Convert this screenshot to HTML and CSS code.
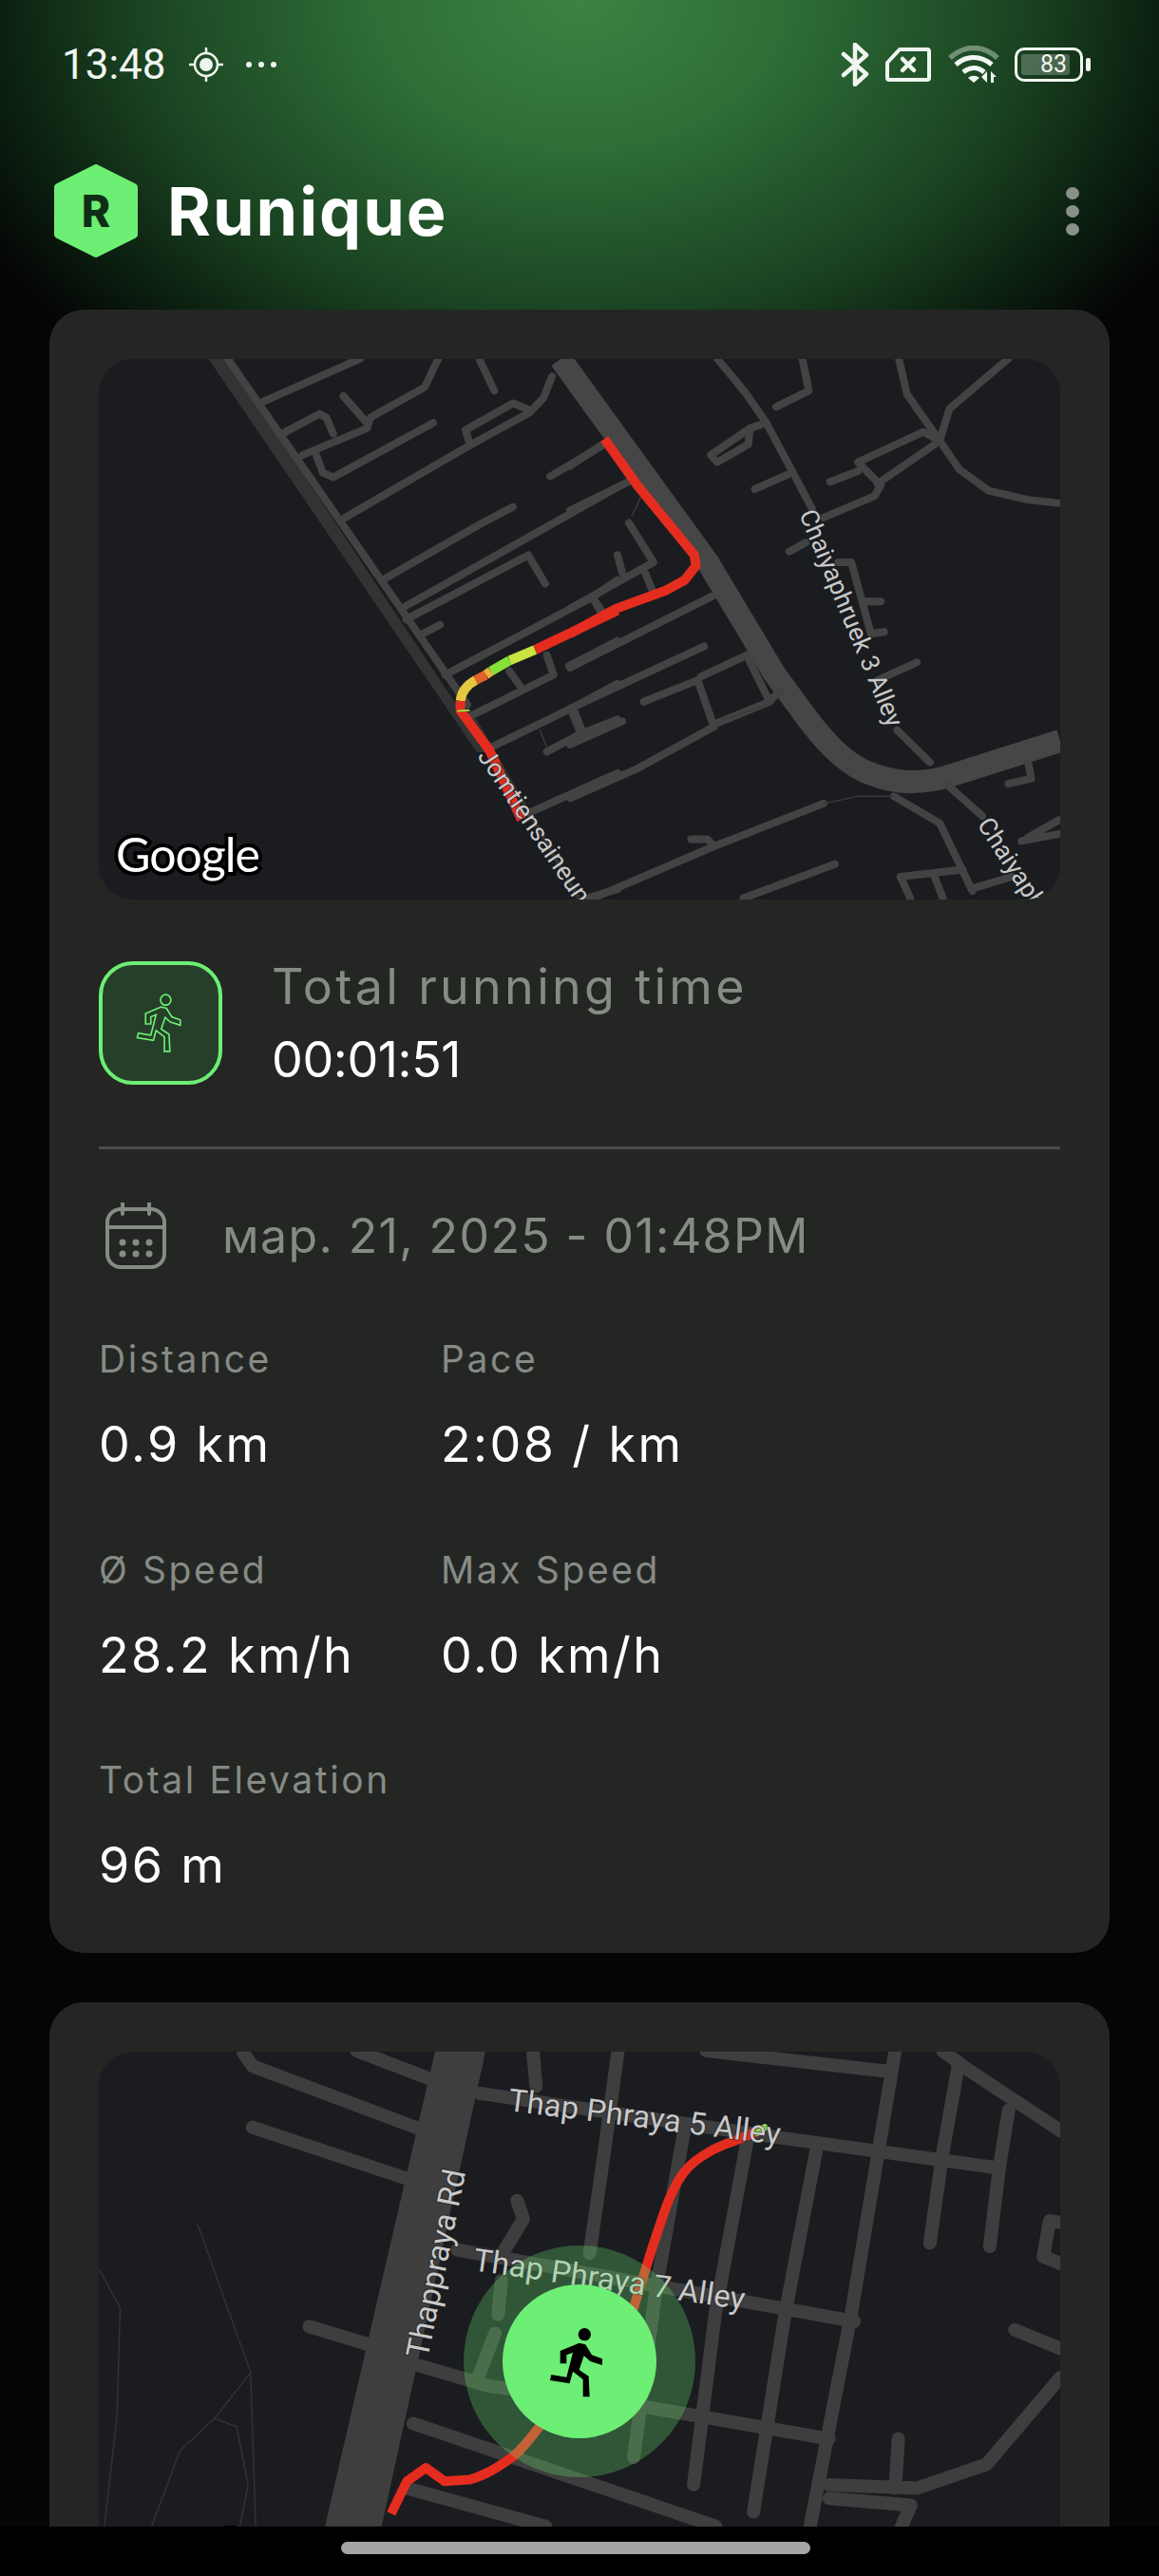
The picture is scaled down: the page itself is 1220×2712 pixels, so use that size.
FILE: index.html
```html
<!DOCTYPE html>
<html lang="en">
<head>
  <meta charset="UTF-8">
  <meta name="viewport" content="width=device-width, initial-scale=1.0">
  <title>Runique</title>
  <link rel="stylesheet" href="styles.css">
</head>
<body>

  <div class="status-bar">
    <div class="status-left">
      <span class="clock">13:48</span>
      <svg class="status-locate" viewBox="0 0 36 36">
        <circle cx="18" cy="18" r="12" fill="none" stroke="#f1f5f0" stroke-width="2.5"/>
        <circle cx="18" cy="18" r="7" fill="#f1f5f0"/>
        <path d="M18 0v6M18 30v6M0 18h6M30 18h6" stroke="#f1f5f0" stroke-width="2.5"/>
      </svg>
      <svg class="status-more" viewBox="0 0 36 8">
        <circle cx="5" cy="4" r="3" fill="#f1f5f0"/>
        <circle cx="18" cy="4" r="3" fill="#f1f5f0"/>
        <circle cx="31" cy="4" r="3" fill="#f1f5f0"/>
      </svg>
    </div>
    <div class="status-right">
      <svg class="status-bt" viewBox="0 0 30 46">
        <path d="M3 12l24 21-12 11V2l12 11L3 34" fill="none" stroke="#f1f5f0" stroke-width="4.5" stroke-linejoin="round" stroke-linecap="round"/>
      </svg>
      <svg class="status-sim" viewBox="0 0 48 36">
        <path d="M15 2h29a2 2 0 0 1 2 2v28a2 2 0 0 1-2 2H4a2 2 0 0 1-2-2V16z" fill="none" stroke="#f1f5f0" stroke-width="4" stroke-linejoin="round"/>
        <path d="M18 12l12 12M30 12L18 24" stroke="#f1f5f0" stroke-width="4.5" stroke-linecap="round"/>
      </svg>
      <svg class="status-wifi" viewBox="0 0 56 40">
        <path d="M3 13C18-1 38-1 53 13" fill="none" stroke="#f1f5f0" stroke-opacity=".4" stroke-width="5.5"/>
        <path d="M9 20c12-10 26-10 38 0" fill="none" stroke="#f1f5f0" stroke-width="5"/>
        <path d="M17 28c7-6 15-6 22 0" fill="none" stroke="#f1f5f0" stroke-width="5"/>
        <path d="M22 34c4-3 8-3 12 0l-6 5z" fill="#f1f5f0"/>
        <path d="M42 27v12l-6-6zM46 27l6 6h-3v6h-3z" fill="#f1f5f0"/>
      </svg>
      <div class="battery">
        <div class="battery-body"><span class="battery-level">83</span></div>
        <div class="battery-nub"></div>
      </div>
    </div>
  </div>

  <div class="topbar">
    <div class="brand">
      <svg class="brand-logo" viewBox="0 0 88 98">
        <polygon class="brand-hex" points="44,4 84,24 84,74 44,94 4,74 4,24"/>
        <text class="brand-letter" x="44" y="66" text-anchor="middle">R</text>
      </svg>
      <span class="brand-name">Runique</span>
    </div>
    <div class="menu-dots"><i></i><i></i><i></i></div>
  </div>

  <div class="card">
    <div class="map">
      <svg class="map-svg" viewBox="104 378 1012 569">
        <polygon class="road-dark" points="222,378 236,378 510,790 503,790"/>
        <path class="road" d="M240 378L492 742"/>
        <path class="road-wide" d="M590 378L745 592L815 709L848 754C866 778 885 800 910 812C930 820 945 824 961 823C975 823 985 821 996 818L1116 780"/>
        <path class="road-dark" d="M495 750L610 947" />
        <g transform="translate(90 370) scale(.3571 .3762)">
          <path class="road" d="M525 140L810 20"/>
          <path class="road" d="M590 225L690 175L710 185L730 230"/>
          <path class="road" d="M640 290L690 270L830 215L840 185L1000 100L1040 20"/>
          <path class="road" d="M760 125L830 200"/>
          <path class="road" d="M1160 20L1205 110"/>
          <path class="road" d="M680 290L700 340L730 352L1025 200"/>
          <path class="road" d="M765 465L1110 275L1310 170L1350 130L1375 70"/>
          <path class="road" d="M1130 250L1120 220L1260 145L1300 160"/>
          <path class="road" d="M1370 350L1520 265"/>
          <path class="road" d="M875 640L1040 550L1170 480L1260 435"/>
          <path class="road" d="M930 720L1568 380"/>
          <path class="road" d="M945 750L1305 570L1355 650"/>
          <path class="road" d="M985 795L1045 765"/>
          <path class="road" d="M1060 905L1490 690L1568 640"/>
          <path class="road" d="M1495 690L1520 730"/>
          <path class="road" d="M1135 1020L1380 905L1360 850"/>
          <path class="road" d="M1250 895L1280 935"/>
          <path class="road" d="M1425 880L1568 810"/>
          <path class="road" d="M1190 1110L1430 1000L1568 930"/>
          <path class="road" d="M1430 1000L1460 1070L1360 1120"/>
          <path class="road" d="M1460 1070L1568 1030"/>
          <path class="road" d="M1310 1290L1568 1180"/>
          <path class="road" d="M1480 1530L1568 1505"/>
          <path class="road-thin" d="M1340 1060L1360 1110"/>
        </g>
        <g transform="translate(600 370) scale(.3444 .3762)">
          <path class="road" d="M450 20L540 120L600 200L740 440"/>
          <path class="road" d="M1000 1060L1100 1150"/>
          <path class="road" d="M600 200L550 215L430 290L450 310L545 260L550 215"/>
          <path class="road" d="M565 385L665 345"/>
          <path class="road" d="M775 465L930 405L950 375L880 310L1080 225L1130 250"/>
          <path class="road" d="M1115 260L940 370"/>
          <path class="road" d="M795 365L880 335"/>
          <path class="road" d="M1005 20L1030 120L1130 250L1190 330L1280 390L1400 415L1497 425"/>
          <path class="road" d="M1130 250L1160 160L1340 20"/>
          <path class="road" d="M630 155L730 110L710 20"/>
          <path class="road" d="M670 560L720 535"/>
          <path class="road" d="M820 590L860 590L920 790L960 785"/>
          <path class="road" d="M905 700L950 700"/>
          <path class="road" d="M940 920L1060 870"/>
          <path class="road" d="M0 320L100 260"/>
          <path class="road" d="M0 445L190 360"/>
          <path class="road" d="M180 480L255 590L0 720"/>
          <path class="road" d="M145 570L160 620"/>
          <path class="road" d="M230 620L250 665"/>
          <path class="road" d="M70 690L100 730"/>
          <path class="road" d="M0 885L435 685"/>
          <path class="road" d="M0 1000L410 825"/>
          <path class="road" d="M225 980L390 920L440 1050"/>
          <path class="road" d="M400 910L540 850L610 980L450 1040"/>
          <path class="road" d="M0 1250L200 1170L440 1050"/>
          <path class="road" d="M610 980L640 950"/>
          <path class="road" d="M15 1010L40 1070"/>
          <path class="road" d="M0 1100L160 1035"/>
          <path class="road" d="M1150 1210L1260 1300"/>
          <path class="road" d="M1340 1210L1410 1195L1400 1150"/>
          <path class="road" d="M70 1530L440 1385L775 1265"/>
          <path class="road" d="M370 1365L420 1365L440 1385"/>
          <path class="road" d="M530 1530L810 1435"/>
          <path class="road" d="M990 1245L1130 1320L1230 1510"/>
          <path class="road" d="M1010 1470L1200 1450"/>
          <path class="road" d="M1010 1470L1040 1530"/>
          <path class="road" d="M1110 1460L1140 1530"/>
          <path class="road" d="M1240 1500L1350 1470"/>
          <path class="road" d="M1400 1360L1497 1310"/>
          <path class="road" d="M1380 1370L1497 1350"/>
          <path class="road-thin" d="M775 1265L880 1245L985 1245"/>
          <path class="road-thin" d="M190 460L215 410"/>
          <path class="road-thin" d="M470 1030L600 990"/>
          <path class="route" d="M105 245L210 380L380 570L385 600L350 640L290 670L140 720L0 790"/>
        </g>
        <g transform="translate(90 370) scale(.3571 .3762)">
          <path class="route" d="M1568 725L1325 835"/>
          <path class="route seg-lime" d="M1325 835L1250 865"/>
          <path class="route seg-green" d="M1250 865L1195 895"/>
          <path class="route seg-amber" d="M1195 895L1180 905"/>
          <path class="route seg-orange" d="M1180 905L1150 920"/>
          <path class="route seg-yellow" d="M1150 920Q1110 940 1105 978"/>
          <path class="route" d="M1105 978L1105 1005L1190 1115L1285 1310"/>
          <path class="route-tick" d="M1098 1006L1130 1004"/>
        </g>
        <text class="map-label" transform="translate(502 796) rotate(56)">Jomtiensaineung</text>
        <text class="map-label" transform="translate(841 541) rotate(67.5)">Chaiyaphruek 3 Alley</text>
        <text class="map-label" transform="translate(1028 868) rotate(57)">Chaiyaphruek</text>
      </svg>
      <span class="google">Google</span>
    </div>

    <div class="summary">
      <div class="summary-icon">
        <svg class="run-outline" viewBox="410 385 180 233">
          <circle cx="527" cy="413" r="20"/>
          <path d="M450 505V465L510 440L530 445L550 478L583 490V510L545 498L525 480L510 525L540 545L543 610H522V555L490 530L480 568L418 558L422 540L470 548L490 470L470 478V505Z"/>
        </svg>
      </div>
      <div class="summary-text">
        <div class="summary-label">Total running time</div>
        <div class="summary-value">00:01:51</div>
      </div>
    </div>

    <div class="divider"></div>

    <div class="date-row">
      <svg class="calendar" viewBox="0 0 64 70">
        <rect x="2" y="7" width="60" height="61" rx="14"/>
        <path d="M2 26H62M18 1V12M46 1V12"/>
        <g class="calendar-dots">
          <circle cx="18" cy="42" r="3.5"/><circle cx="32" cy="42" r="3.5"/><circle cx="46" cy="42" r="3.5"/>
          <circle cx="18" cy="54" r="3.5"/><circle cx="32" cy="54" r="3.5"/><circle cx="46" cy="54" r="3.5"/>
        </g>
      </svg>
      <span class="date-text">мар. 21, 2025 - 01:48PM</span>
    </div>

    <div class="stats">
      <div class="stat"><div class="stat-label">Distance</div><div class="stat-value">0.9 km</div></div>
      <div class="stat"><div class="stat-label">Pace</div><div class="stat-value">2:08 / km</div></div>
      <div class="stat"><div class="stat-label">Ø Speed</div><div class="stat-value">28.2 km/h</div></div>
      <div class="stat"><div class="stat-label">Max Speed</div><div class="stat-value">0.0 km/h</div></div>
      <div class="stat"><div class="stat-label">Total Elevation</div><div class="stat-value">96 m</div></div>
    </div>
  </div>

  <div class="card">
    <div class="map">
      <svg class="map-svg" viewBox="104 2160 1012 569">
        <g transform="translate(90 2150) scale(.6633 .3584)">
          <path class="line" d="M178 535L262 970L270 1420"/>
          <path class="line" d="M262 970L205 1105L150 1200L105 1422"/>
          <path class="line" d="M205 1105L240 1130L258 1300L245 1422"/>
          <path class="line" d="M22 670L55 780L50 1100L30 1422"/>
          <path class="street" d="M250 30L265 70L545 265"/>
          <path class="street" d="M430 25L550 110"/>
          <path class="street" d="M265 250L525 410"/>
          <path class="street" d="M625 150L1100 280L1450 370"/>
          <path class="street" d="M985 25L1270 85"/>
          <path class="street" d="M1285 25L1262 280L1215 800L1150 1422"/>
          <path class="street" d="M1360 25L1400 80L1547 260"/>
          <path class="street" d="M1385 70L1360 330L1340 590"/>
          <path class="street" d="M1465 200L1450 370L1435 600"/>
          <path class="street" d="M710 25L715 130"/>
          <path class="street" d="M845 25L825 300L800 620"/>
          <path class="street" d="M660 700L655 800"/>
          <path class="street" d="M650 855L620 1000"/>
          <path class="street" d="M950 260L905 730L870 1220"/>
          <path class="street" d="M1050 290L1000 790L965 1300"/>
          <path class="street" d="M1160 315L1110 800L1060 1380"/>
          <path class="street" d="M685 465L695 520L665 610"/>
          <path class="street" d="M590 610L1220 820"/>
          <path class="street" d="M355 835L470 900"/>
          <path class="street" d="M530 950L640 1010L900 1075L1180 1165"/>
          <path class="street" d="M520 1120L1000 1422"/>
          <path class="street" d="M510 1310L730 1422"/>
          <path class="street" d="M1180 1300L1320 1310L1430 1240L1547 985"/>
          <path class="street" d="M1290 1165L1285 1310"/>
          <path class="street" d="M1180 1340L1310 1360L1295 1422"/>
          <path class="street" d="M1475 845L1547 900"/>
          <path class="street" d="M1547 530L1530 525L1520 630L1547 650"/>
          <polygon class="artery" points="555,25 635,25 470,1422 380,1422"/>
          <path class="route" d="M485 1385L510 1290L540 1250L570 1290L610 1285C640 1270 665 1235 680 1215C695 1190 710 1155 720 1130L870 780L900 600C915 520 925 450 945 395C960 350 995 310 1030 290L1075 255"/>
          <path class="route-end" d="M1066 266L1078 250"/>
        </g>
        <text class="map-label map-label-big" transform="translate(534 2222) rotate(7.2)">Thap Phraya 5 Alley</text>
        <text class="map-label map-label-big" transform="translate(497 2390) rotate(8.3)">Thap Phraya 7 Alley</text>
        <text class="map-label map-label-big" transform="translate(450 2484) rotate(-78.5)">Thappraya Rd</text>
        <circle class="pulse" cx="610" cy="2486" r="122"/>
        <circle class="pulse-core" cx="610" cy="2486" r="81"/>
        <g transform="translate(579 2451) scale(.3333)">
          <g transform="translate(-418 -393)">
            <circle cx="527" cy="413" r="20"/>
            <path d="M450 505V465L510 440L530 445L550 478L583 490V510L545 498L525 480L510 525L540 545L543 610H522V555L490 530L480 568L418 558L422 540L470 548L490 470L470 478V505Z"/>
          </g>
        </g>
      </svg>
      <span class="google">Google</span>
    </div>
  </div>

  <div class="nav-bar"><div class="nav-handle"></div></div>

</body>
</html>
```

FILE: styles.css
```css
html, body {
  margin: 0;
  padding: 0;
}
body {
  position: relative;
  width: 1220px;
  height: 2712px;
  overflow: hidden;
  font-family: 'Inter', 'Noto Sans', sans-serif;
  background-color: #050505;
  background-image: radial-gradient(ellipse 720px 520px at 610px 0, #3c8342 0%, #2e6e37 30%, #1a4221 65%, #0b2010 85%, #050505 100%);
  background-repeat: no-repeat;
}

/* status bar */
.status-bar {
  height: 136px;
  padding: 0 72px 0 65px;
  display: flex;
  align-items: center;
  justify-content: space-between;
  box-sizing: border-box;
}
.status-left, .status-right {
  display: flex;
  align-items: center;
}
.clock {
  font-family: 'Roboto', sans-serif;
  font-size: 44px;
  color: #f1f5f0;
}
.status-locate {
  width: 36px;
  height: 36px;
  margin-left: 24px;
}
.status-more {
  width: 36px;
  height: 8px;
  margin-left: 22px;
}
.status-bt {
  width: 30px;
  height: 46px;
}
.status-sim {
  width: 48px;
  height: 36px;
  margin-left: 17px;
}
.status-wifi {
  width: 56px;
  height: 40px;
  margin-left: 17px;
}
.battery {
  display: flex;
  align-items: center;
  margin-left: 15px;
}
.battery-body {
  width: 72px;
  height: 36px;
  border: 3px solid #f1f5f0;
  border-radius: 10px;
  box-sizing: border-box;
  padding: 4px;
  display: flex;
}
.battery-level {
  width: 83%;
  background: rgba(241, 245, 240, .25);
  border-radius: 3px;
  font-family: 'Roboto', sans-serif;
  font-size: 25px;
  line-height: 22px;
  text-align: right;
  padding-right: 3px;
  color: #f1f5f0;
}
.battery-nub {
  width: 5px;
  height: 14px;
  margin-left: 3px;
  border-radius: 2px;
  background: #f1f5f0;
}

/* top bar */
.topbar {
  height: 172px;
  margin-bottom: 18px;
  padding: 0 84px 0 57px;
  display: flex;
  align-items: center;
  justify-content: space-between;
}
.brand {
  display: flex;
  align-items: center;
}
.brand-logo {
  width: 88px;
  height: 98px;
}
.brand-hex {
  fill: #6dee74;
  stroke: #6dee74;
  stroke-width: 8;
  stroke-linejoin: round;
}
.brand-letter {
  font-size: 46px;
  font-weight: 800;
  fill: #0f2e16;
}
.brand-name {
  margin-left: 31px;
  font-size: 70px;
  font-weight: 700;
  letter-spacing: 2px;
  color: #ffffff;
}
.menu-dots {
  display: flex;
  flex-direction: column;
  gap: 6px;
}
.menu-dots i {
  display: block;
  width: 14px;
  height: 13px;
  border-radius: 50%;
  background: #8a9089;
}

/* cards */
.card {
  margin: 0 52px 52px;
  padding: 52px 52px 62px;
  background: #242624;
  border-radius: 36px;
}
.map {
  position: relative;
  height: 569px;
  background: #1a1c20;
  border-radius: 36px;
  overflow: hidden;
}
.map-svg {
  display: block;
  width: 1012px;
  height: 569px;
}
.road, .road-wide, .road-thin, .road-dark, .street, .line, .route, .route-tick, .route-end {
  fill: none;
  stroke-linecap: round;
  stroke-linejoin: round;
  vector-effect: non-scaling-stroke;
}
.road {
  stroke: #434343;
  stroke-width: 8;
}
.road-wide {
  stroke: #464646;
  stroke-width: 24;
  stroke-linecap: butt;
}
.road-thin {
  stroke: #3a3a3a;
  stroke-width: 1.5;
}
.road-dark {
  fill: #333333;
  stroke: #333333;
  stroke-width: 4;
}
.street {
  stroke: #3e3e3e;
  stroke-width: 14;
}
.line {
  stroke: #303235;
  stroke-width: 1.5;
}
.artery {
  fill: #3e3e3e;
}
.route {
  stroke: #e52d1f;
  stroke-width: 10;
  stroke-linecap: butt;
}
.seg-lime {
  stroke: #c9e23f;
}
.seg-green {
  stroke: #86e23a;
}
.seg-amber {
  stroke: #e8b23a;
}
.seg-orange {
  stroke: #e4622a;
}
.seg-yellow {
  stroke: #e6c63e;
}
.route-tick {
  stroke: #8fe03a;
  stroke-width: 2;
}
.route-end {
  stroke: #8fe04a;
  stroke-width: 7;
}
.map-label {
  font-family: 'Roboto', sans-serif;
  font-size: 26.5px;
  fill: #c9c9c9;
  stroke: #1a1c20;
  stroke-opacity: .6;
  stroke-width: 2px;
  paint-order: stroke fill;
}
.map-label-big {
  font-size: 33px;
}
.pulse {
  fill: rgba(109, 238, 116, .28);
}
.pulse-core {
  fill: #6dee74;
}
.google {
  position: absolute;
  left: 18px;
  bottom: 18px;
  font-family: 'Lato', sans-serif;
  font-size: 50px;
  font-weight: 400;
  letter-spacing: -1px;
  line-height: 60px;
  color: #ffffff;
  -webkit-text-stroke: 8px #000000;
  paint-order: stroke fill;
}

/* run summary */
.summary {
  margin-top: 65px;
  height: 130px;
  display: flex;
  align-items: center;
}
.summary-icon {
  width: 130px;
  height: 130px;
  box-sizing: border-box;
  border: 4px solid #6dee74;
  border-radius: 36px;
  background: #263f2a;
  display: flex;
  align-items: center;
  justify-content: center;
}
.run-outline {
  width: 50px;
  height: 64px;
  margin-right: 4px;
  fill: none;
  stroke: #6dee74;
  stroke-width: 6;
}
.summary-text {
  margin-left: 52px;
}
.summary-label, .summary-value {
  height: 77px;
  line-height: 77px;
  font-size: 52px;
}
.summary-label {
  color: #868b85;
  letter-spacing: 3.3px;
}
.summary-value {
  color: #ffffff;
  letter-spacing: -.4px;
}
.divider {
  margin-top: 65px;
  height: 3px;
  background: #4a4d49;
}

/* date */
.date-row {
  margin-top: 57px;
  padding-left: 7px;
  height: 68px;
  display: flex;
  align-items: center;
}
.calendar {
  width: 64px;
  height: 70px;
  fill: none;
  stroke: #868b85;
  stroke-width: 4;
  stroke-linecap: round;
}
.calendar-dots {
  fill: #868b85;
  stroke: none;
}
.date-text {
  margin-left: 59px;
  font-size: 50px;
  letter-spacing: 1.4px;
  color: #868b85;
}

/* stats */
.stats {
  margin-top: 66px;
  display: grid;
  grid-template-columns: 360px 360px;
  row-gap: 71.5px;
}
.stat-label {
  height: 60px;
  line-height: 60px;
  font-size: 39px;
  letter-spacing: 2.6px;
  color: #868b85;
}
.stat-value {
  margin-top: 30px;
  height: 60px;
  line-height: 60px;
  font-size: 52px;
  letter-spacing: 2.4px;
  color: #ffffff;
}

/* gesture bar */
.nav-bar {
  position: absolute;
  left: 0;
  right: 0;
  bottom: 0;
  height: 52px;
  background: #000000;
}
.nav-handle {
  position: absolute;
  left: 359px;
  top: 16px;
  width: 494px;
  height: 13px;
  border-radius: 7px;
  background: #a5a5a5;
}
```
